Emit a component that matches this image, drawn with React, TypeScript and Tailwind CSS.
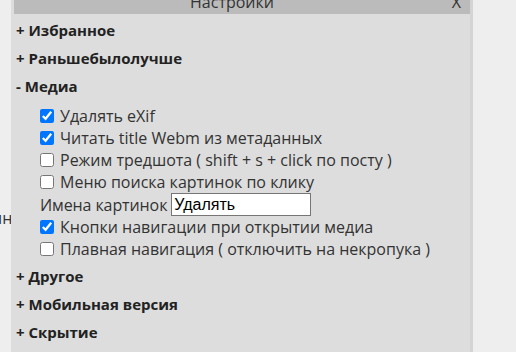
import { useState } from "react";

type Opt = { label: string; checked: boolean };

const sections = ["Избранное", "Раньшебылолучше"];
const after = ["Другое", "Мобильная версия", "Скрытие"];

const mediaTop: Opt[] = [
  { label: "Удалять eXif", checked: true },
  { label: "Читать title Webm из метаданных", checked: true },
  { label: "Режим тредшота ( shift + s + click по посту )", checked: false },
  { label: "Меню поиска картинок по клику", checked: false },
];

const mediaBottom: Opt[] = [
  { label: "Кнопки навигации при открытии медиа", checked: true },
  { label: "Плавная навигация ( отключить на некропука )", checked: false },
];

function Header({ sign, title }: { sign: string; title: string }) {
  return (
    <div className="h-[28px] flex items-center pl-[2px] font-bold text-[15px] text-[#222]">
      {sign} {title}
    </div>
  );
}

function Check({ opt }: { opt: Opt }) {
  const [on, setOn] = useState(opt.checked);
  return (
    <label className="h-[22px] flex items-center gap-[6px] pl-[26px]">
      <input
        type="checkbox"
        checked={on}
        onChange={() => setOn(!on)}
        className="w-[14px] h-[14px] m-0"
      />
      <span>{opt.label}</span>
    </label>
  );
}

export default function App() {
  return (
    <div className="relative w-[516px] h-[352px] overflow-hidden bg-[#eeeeee] font-['Open_Sans',sans-serif] text-[16px] text-[#333]">
      {/* page text behind the settings panel */}
      <div className="pt-[206px] -ml-[8px] text-[#333]">ин</div>

      {/* Settings panel */}
      <div className="absolute left-[11px] top-0 w-[462px] h-[352px] bg-[#dddddd] pl-[3px] border-r-[3px] border-[#d4d4d4]">
        <div className="-mt-[10px] h-[24px] bg-[#bbbbbb] flex items-center justify-center relative text-[#333]">
          <span className="pr-[20px]">Настройки</span>
          <span className="absolute right-[9px] top-0 leading-[24px]">X</span>
        </div>
        <div className="pt-[2px]">
          {sections.map((s) => (
            <Header key={s} sign="+" title={s} />
          ))}
          <Header sign="-" title="Медиа" />
          <div className="pt-[5px] pb-[2px]">
            {mediaTop.map((o) => (
              <Check key={o.label} opt={o} />
            ))}
            <div className="h-[23px] flex items-center pl-[26px] gap-[4px]">
              <span className="tracking-[-0.1px]">Имена картинок</span>
              <input
                defaultValue="Удалять"
                className="w-[140px] h-[23px] bg-white border border-[#767676] px-[2px] font-['Liberation_Sans',sans-serif] text-[16px] text-black outline-none"
              />
            </div>
            {mediaBottom.map((o) => (
              <Check key={o.label} opt={o} />
            ))}
          </div>
          {after.map((s) => (
            <Header key={s} sign="+" title={s} />
          ))}
        </div>
      </div>
    </div>
  );
}
